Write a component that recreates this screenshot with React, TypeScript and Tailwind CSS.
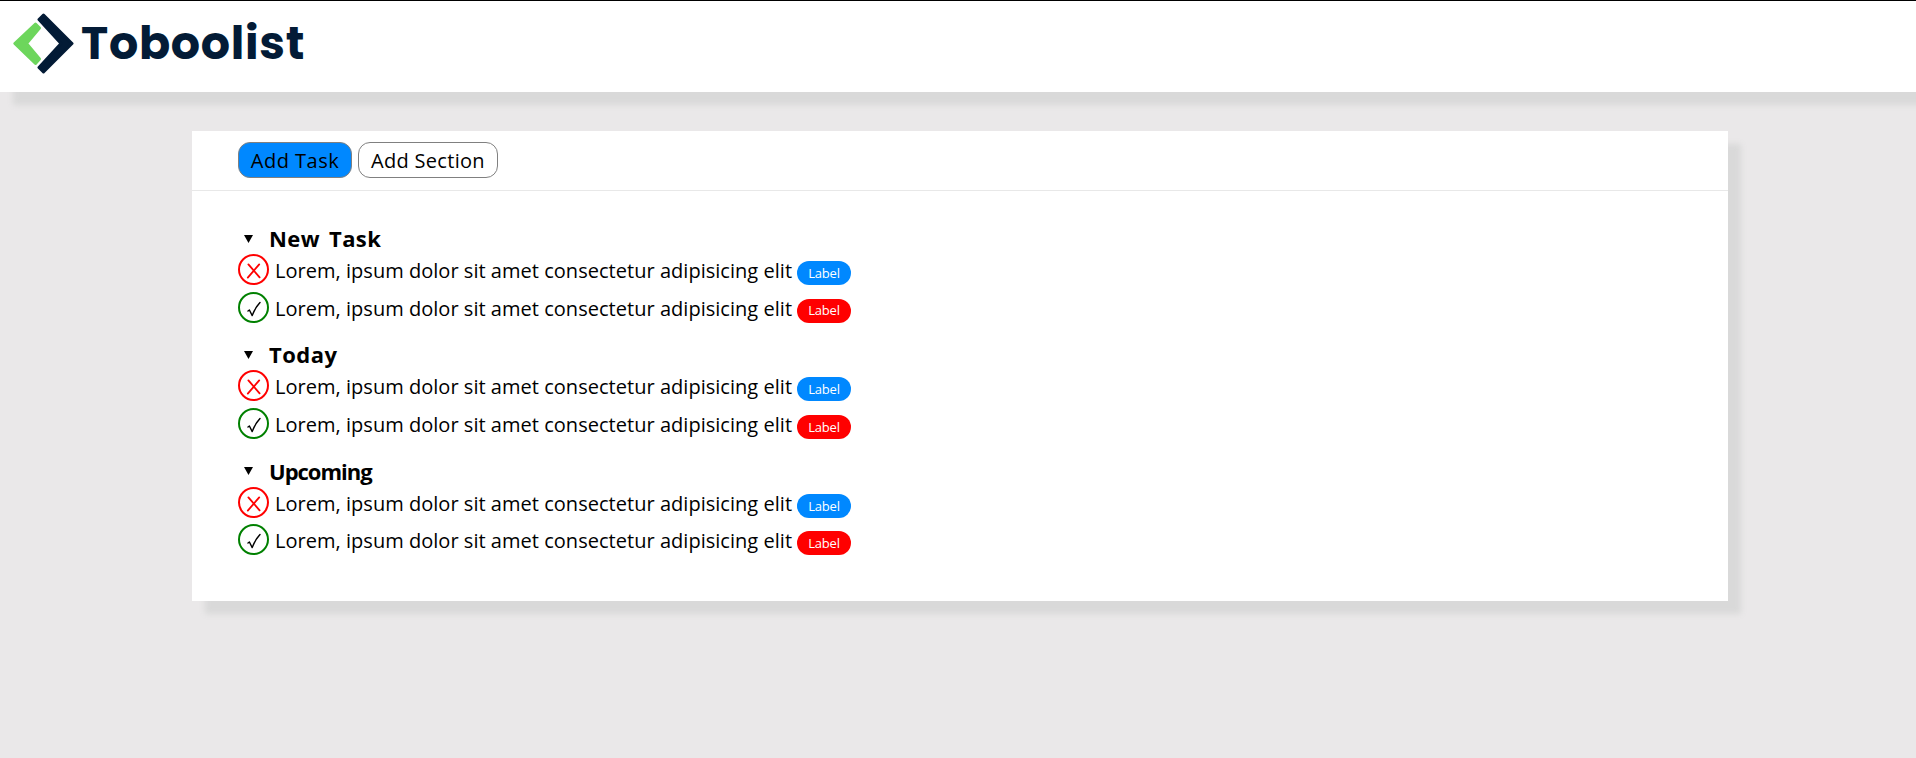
import React from "react";

const sections = ["New Task", "Today", "Upcoming"];
const headingTracking = ["tracking-[0.4px] [word-spacing:3px]", "tracking-[0.5px]", "tracking-[-1px]"];

function Logo() {
  return (
    <svg width="62" height="62" viewBox="0 0 62 62" aria-hidden="true">
      <g strokeWidth="3" strokeLinejoin="round">
        <path d="M23.5 11 L27.5 15 L14.5 30.5 L27.5 46 L23.5 50.5 L2.8 30.5 Z" fill="#6dd65c" stroke="#6dd65c" />
        <path d="M31.5 2 L60 30.5 L31.5 59 L27 54.5 L49 30.5 L27 6.5 Z" fill="#031b36" stroke="#031b36" />
      </g>
    </svg>
  );
}

function StatusIcon({ done }: { done: boolean }) {
  return (
    <span
      className={`flex h-[31px] w-[31px] shrink-0 items-center justify-center rounded-full border-2 ${
        done ? "border-[#008000] text-black" : "border-[#ff0000] text-[#ff0000]"
      }`}
    >
      <svg width="27" height="27" viewBox="0 0 27 27" fill="none" stroke="currentColor" strokeLinecap="round" aria-hidden="true">
        {done ? (
          <path d="M8 17 L9.4 16 L12.2 21.6 Q15 14 20 8.6" strokeWidth="1.4" strokeLinejoin="round" />
        ) : (
          <path d="M8.4 8.4 L19.6 21.4 M19.2 8.4 L7.8 21.6" strokeWidth="1.8" />
        )}
      </svg>
    </span>
  );
}

function TaskRow({ done }: { done: boolean }) {
  return (
    <li className="flex h-[37.5px] items-start">
      <StatusIcon done={done} />
      <span className="ml-[6px] mt-[3px] w-[516px] whitespace-nowrap text-[20px] leading-[28px] tracking-[0.03px]">
        Lorem, ipsum dolor sit amet consectetur adipisicing elit
      </span>
      <span
        className={`ml-[6px] mt-[7px] flex h-6 w-[54px] items-center justify-center rounded-full pt-px text-[13px] tracking-[-0.2px] text-white ${
          done ? "bg-[#ff0000]" : "bg-[#0088ff]"
        }`}
      >
        Label
      </span>
    </li>
  );
}

export default function App() {
  return (
    <div className="h-[758px] overflow-hidden bg-[#eae8e9] font-['Comic_Sans_MS','Open_Sans',sans-serif] text-black">
      <header className="flex h-[92px] border-t border-black bg-white pl-[12px] pt-[12px] shadow-[13px_13px_6px_#d9d9d9]">
        <Logo />
        <span className="ml-[7px] text-[46px] font-bold leading-[60px] tracking-[0.7px] text-[#031b36] font-['Poppins','Inter',sans-serif]">
          Toboolist
        </span>
      </header>
      <main className="ml-[192px] mt-[39px] h-[470px] w-[1536px] bg-white shadow-[13px_13px_6px_#d9d9d9]">
        <div className="flex h-[60px] gap-[6px] border-b border-[#e8e8e8] pl-[46px] pt-[11px]">
          <button className="h-9 w-[114px] whitespace-nowrap rounded-xl border border-[#808080] bg-[#0088ff] pt-px text-[20px] leading-[33px] tracking-[0.5px]">
            Add Task
          </button>
          <button className="h-9 w-[140px] whitespace-nowrap rounded-xl border border-[#808080] bg-white pt-px text-[20px] leading-[33px] tracking-[0.3px]">
            Add Section
          </button>
        </div>
        <div className="pl-[46px] pt-[30px]">
          {sections.map((name, i) => (
            <section key={name} className="h-[116.4px]">
              <h2 className="flex h-[33px] items-center pt-[2px] text-[22px] font-bold leading-[33px]">
                <svg className="ml-[6px] mr-[16px]" width="9" height="8" viewBox="0 0 9 8" aria-hidden="true">
                  <path d="M0 0 H9 L4.5 8 Z" fill="#000" />
                </svg>
                <span className={headingTracking[i]}>{name}</span>
              </h2>
              <ul>
                <TaskRow done={false} />
                <TaskRow done={true} />
              </ul>
            </section>
          ))}
        </div>
      </main>
    </div>
  );
}
